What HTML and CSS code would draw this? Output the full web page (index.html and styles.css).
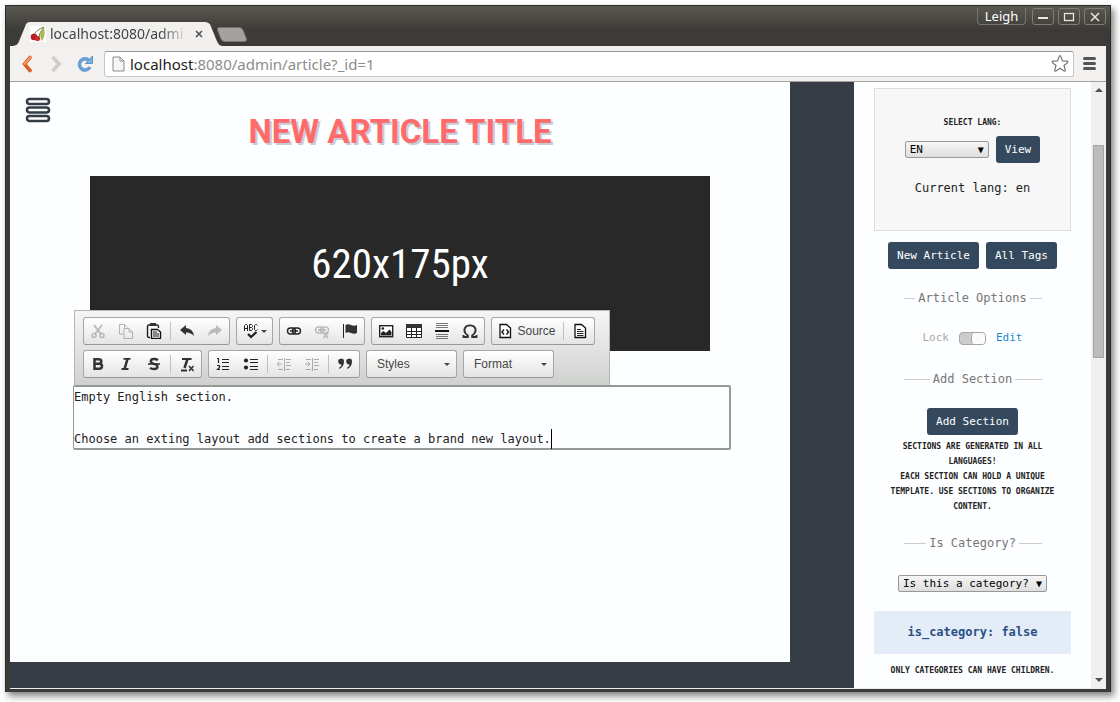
FILE: index.html
```html
<!DOCTYPE html>
<html lang="en">
<head>
<meta charset="utf-8">
<title>New article</title>
<link rel="stylesheet" href="styles.css">
</head>
<body>
<div class="window">
  <header class="titlebar">
    <div class="tab">
      <svg class="tab-shape" viewBox="0 0 208 24" preserveAspectRatio="none" aria-hidden="true"><path d="M0 24 C5 24 7 22 8 19 L14 4 C15 1 16 0 19 0 H189 C193 0 195 1 196 4 L202 19 C203 22 205 24 208 24 Z" fill="#f1f0ef"/></svg>
      <svg class="favicon" width="16" height="16" viewBox="0 0 16 16" aria-hidden="true"><rect width="16" height="16" fill="#fff"/><path d="M14 1 C9 3 6 5 3 10 M14 1 C11 5 9 8 9 12" fill="none" stroke="#7a6a3a"/><path d="M14 1 C15 6 15 11 12 15 C9 10 10 5 14 1Z" fill="#9dbb55"/><circle cx="4" cy="11" r="3.3" fill="#b3202a"/><circle cx="7.500" cy="12.500" r="2.600" fill="#d02a30"/></svg>
      <span class="tab-title">localhost:8080/admi</span>
      <button class="tab-close" aria-label="Close tab"><svg width="8" height="8" viewBox="0 0 8 8"><path d="M1 1L7 7M7 1L1 7" stroke="#555" stroke-width="1.700"/></svg></button>
    </div>
    <button class="new-tab" aria-label="New tab"><svg width="32" height="15" viewBox="0 0 32 15"><path d="M3 .5H23Q26 .5 27 3L30.500 12Q31 14.500 28 14.500H9Q6 14.500 5 12L1.500 3Q1 .5 3 .5Z" fill="#a3a29e" stroke="#77756f"/></svg></button>
    <div class="window-controls">
      <button class="user">Leigh</button>
      <button class="control" aria-label="Minimize"><svg width="12" height="10" viewBox="0 0 12 10"><path d="M1 6H11" stroke="#e8e6e1" stroke-width="2"/></svg></button>
      <button class="control" aria-label="Maximize"><svg width="12" height="10" viewBox="0 0 12 10"><rect x="1.500" y="1.500" width="9" height="7" fill="none" stroke="#e8e6e1" stroke-width="1.300"/></svg></button>
      <button class="control" aria-label="Close"><svg width="12" height="10" viewBox="0 0 12 10"><path d="M2 1L10 9M10 1L2 9" stroke="#e8e6e1" stroke-width="1.500"/></svg></button>
    </div>
  </header>
  <nav class="navbar">
    <button class="nav-button" aria-label="Back"><svg width="12" height="18" viewBox="0 0 12 18"><path d="M9 2.500L3.500 9L9 15.500" fill="none" stroke="#de5f25" stroke-width="3.600" stroke-linecap="round"/><path d="M9 2.500L3.500 9" fill="none" stroke="#ee9a62" stroke-width="2" stroke-linecap="round"/></svg></button>
    <button class="nav-button" aria-label="Forward"><svg width="12" height="18" viewBox="0 0 12 18"><path d="M3.500 3L9 9L3.500 15" fill="none" stroke="#cfcdca" stroke-width="3.600" stroke-linecap="round"/></svg></button>
    <button class="nav-button" aria-label="Reload"><svg width="18" height="18" viewBox="0 0 18 18"><path d="M13 5.500A5.600 5.600 0 1 0 14 12" fill="none" stroke="#6a9fd4" stroke-width="3.600"/><path d="M16.500 1V8.500H9.500Z" fill="#7fb0df" stroke="#5b92cb"/></svg></button>
    <div class="address">
      <svg width="13" height="16" viewBox="0 0 13 16" aria-hidden="true"><path d="M1 1H8L12 5V15H1Z" fill="#f5f5f5" stroke="#8b8b8b"/><path d="M8 1V5H12" fill="none" stroke="#8b8b8b"/></svg>
      <span class="url"><b>localhost</b>:8080/admin/article?_id=1</span>
      <button class="star" aria-label="Bookmark"><svg width="20" height="19" viewBox="0 0 20 19"><path d="M10 1.500Q10.500 1.500 11 3L12.500 7L17 7.200Q18.500 7.500 17.500 8.700L14 11.500L15.300 16Q15.500 17.500 14 17L10 14.300L6 17Q4.500 17.500 4.700 16L6 11.500L2.500 8.700Q1.500 7.500 3 7.200L7.500 7L9 3Q9.500 1.500 10 1.500Z" fill="#fff" stroke="#777" stroke-width="1.200"/></svg></button>
    </div>
    <button class="menu" aria-label="Menu"><svg width="13" height="13" viewBox="0 0 13 13"><path d="M1.500 1.500H11.500M1.500 6.500H11.500M1.500 11.500H11.500" stroke="#555" stroke-width="3" stroke-linecap="round"/></svg></button>
  </nav>
  <div class="page">
    <div class="backdrop">
      <main class="paper">
        <button class="site-menu" aria-label="Site menu"><svg width="26" height="26" viewBox="0 0 26 26"><g fill="#fff" stroke="#343c47" stroke-width="2.600"><rect x="2" y="2" width="22" height="5" rx="2.500"/><rect x="2" y="10.500" width="22" height="5" rx="2.500"/><rect x="2" y="19" width="22" height="5" rx="2.500"/></g></svg></button>
        <h1>NEW ARTICLE TITLE</h1>
        <div class="placeholder">620x175px</div>
        <section class="editor">
          <div class="toolbar" role="toolbar" aria-label="Editor toolbar">
            <div class="row">
              <div class="group">
                <button class="off" aria-label="Cut"><svg viewBox="0 0 16 16"><g fill="none" stroke="#777" stroke-width="1.500"><path d="M4 2L11 11M12 2L5 11" stroke-width="2"/><circle cx="4" cy="12.500" r="2"/><circle cx="12" cy="12.500" r="2"/></g></svg></button>
                <button class="off" aria-label="Copy"><svg viewBox="0 0 16 16"><path d="M5 11H1.500V1.500H6.500L9.500 4.500M6 5.500H11L14.500 9V15.500H6ZM11 5.500V9H14.500M6.500 1.500V5" fill="none" stroke="#666"/></svg></button>
                <button aria-label="Paste"><svg viewBox="0 0 16 16"><path d="M4 14.500H3Q1.500 14.500 1.500 13V3.500Q1.500 2 3 2H11Q12.500 2 12.500 3.500V5" fill="none" stroke="#222" stroke-width="1.400"/><path d="M4 0H10V3H4Z" fill="#333"/><path d="M5.500 6.500H11.500L14.500 9V15.500H5.500Z" fill="#fff" stroke="#111" stroke-width="1.400"/><path d="M7 9H11M7 11H13M7 13H13" stroke="#111"/></svg></button>
                <i class="sep"></i>
                <button aria-label="Undo"><svg viewBox="0 0 16 16"><path d="M1 7L7 2V5Q14 5.500 15 13Q12 9.500 7 9.500V12Z" fill="#333"/></svg></button>
                <button class="off" aria-label="Redo"><svg viewBox="0 0 16 16"><path d="M15 7L9 2V5Q2 5.500 1 13Q4 9.500 9 9.500V12Z" fill="#777"/></svg></button>
              </div>
              <div class="group">
                <button class="spell" aria-label="Spell check"><svg viewBox="0 0 16 16"><g fill="none" stroke="#222" stroke-width="1"><path d="M1.500 8V2.500L2.500 1.500H3.500L4.500 2.500V8M1.500 5.500H4.500M6.500 1.500V7.500H8.500L9.500 6.500V5.500L8.500 4.500H6.500M6.500 1.500H8.500L9.500 2.500V3.500L8.500 4.500M14.500 2.500L13.500 1.500H12.500L11.500 2.500V6.500L12.500 7.500H13.500L14.500 6.500"/><path d="M5 11L8 14L13.500 9" stroke-width="2.300"/></g></svg><span class="caret"></span></button>
              </div>
              <div class="group">
                <button aria-label="Link"><svg viewBox="0 0 16 16"><g fill="none" stroke="#222" stroke-width="1.400"><rect x="1.500" y="5" width="8" height="6" rx="3"/><rect x="6.500" y="5" width="8" height="6" rx="3"/><path d="M4 8H12"/></g></svg></button>
                <button class="off" aria-label="Unlink"><svg viewBox="0 0 16 16"><g fill="none" stroke="#777" stroke-width="1.400"><rect x="1.500" y="4" width="8" height="6" rx="3"/><rect x="6.500" y="4" width="8" height="6" rx="3"/><path d="M4 7H12M9.500 10L14 15M14 10L9.500 15" stroke-width="1.800"/></g></svg></button>
                <button aria-label="Anchor"><svg viewBox="0 0 16 16"><path d="M1.500 1V15" stroke="#222" stroke-width="1"/><path d="M3.500 2Q6 .5 9 2T15 2V10Q12 11.500 9 10T3.500 10Z" fill="#333"/></svg></button>
              </div>
              <div class="group">
                <button aria-label="Image"><svg viewBox="0 0 16 16"><rect x="1.700" y="2.700" width="13" height="11" fill="#fff" stroke="#222" stroke-width="1.400"/><path d="M3 12.500V10L5.500 8L8 10L11.500 6.500L13.500 9V12.500Z" fill="#222"/><circle cx="4.800" cy="5.500" r="1.300" fill="#222"/></svg></button>
                <button aria-label="Table"><svg viewBox="0 0 16 16"><path d="M.5 1.500H15.500V14.500H.5Z" fill="#fff" stroke="#222"/><path d="M0 1H16V5H0Z" fill="#333"/><path d="M0 8.500H16M0 11.500H16M5.500 5V15M10.500 5V15" stroke="#222"/></svg></button>
                <button aria-label="Horizontal line"><svg viewBox="0 0 16 16"><path d="M2 .5H14M2 2.500H14M2 4.500H14M2 11.500H14M2 13.500H14M2 15.500H14" stroke="#777"/><path d="M1 8H15" stroke="#111" stroke-width="2"/></svg></button>
                <button aria-label="Special character"><svg viewBox="0 0 16 16"><path d="M1.500 12V14H5.800V12.500C2.500 10 1.500 8 3 5C4.500 1.500 11.500 1.500 13 5C14.500 8 13.500 10 10.200 12.500V14H14.500V12" fill="none" stroke="#333" stroke-width="1.900"/></svg></button>
              </div>
              <div class="group">
                <button class="source"><svg viewBox="0 0 16 16" aria-hidden="true"><path d="M3 1.500H9.500L13.500 5V14.500H3Z" fill="#fff" stroke="#111" stroke-width="1.300"/><path d="M7 6.500L5 9L7 11.500M9.500 6.500L11.500 9L9.500 11.500" fill="none" stroke="#222" stroke-width="1.500"/></svg>Source</button>
                <i class="sep"></i>
                <button aria-label="Templates"><svg viewBox="0 0 16 16"><path d="M3 1.500H9.500L13.500 5V14.500H3Z" fill="#fff" stroke="#111" stroke-width="1.300"/><path d="M5 6.500H9M5 8.500H11.500M5 10.500H11.500M5 12.500H11.500" stroke="#222"/></svg></button>
              </div>
            </div>
            <div class="row">
              <div class="group">
                <button aria-label="Bold"><svg viewBox="0 0 16 16"><path d="M4.500 3.300H8.500Q11.300 3.300 11.300 5.500T8.500 7.700H4.500ZM4.500 7.700H9Q12 7.700 12 10.200T9 12.700H4.500Z" fill="none" stroke="#333" stroke-width="2.500"/></svg></button>
                <button aria-label="Italic"><svg viewBox="0 0 16 16"><path d="M5.500 2.900H12.500M3.500 13H10.500" stroke="#333" stroke-width="1.800"/><path d="M9.500 3L6.500 13" stroke="#333" stroke-width="2.600"/></svg></button>
                <button aria-label="Strikethrough"><svg viewBox="0 0 16 16"><path d="M12 4.200Q10.500 3 8 3Q4.800 3 4.800 5.300Q4.800 7 8 7.800Q11.500 8.500 11.500 10.700Q11.500 13 8 13Q5.500 13 4 11.800" fill="none" stroke="#333" stroke-width="2.300"/><path d="M2 8H14" stroke="#333" stroke-width="1.600"/></svg></button>
                <i class="sep"></i>
                <button aria-label="Remove format"><svg viewBox="0 0 16 16"><path d="M3 3H12.500M2 14.500H8" stroke="#333" stroke-width="1.800"/><path d="M8.500 3L5.500 12" stroke="#333" stroke-width="2.500"/><path d="M10 10L14.500 15M14.500 10L10 15" stroke="#333" stroke-width="1.600"/></svg></button>
              </div>
              <div class="group">
                <button aria-label="Numbered list"><svg viewBox="0 0 16 16"><path d="M2 2.500H3.500V7M2 9.500H4.500V11.500L2.500 13.500H5" fill="none" stroke="#222" stroke-width="1.200"/><path d="M7 3.500H14M7 6.500H14M7 10.500H14M7 13.500H14" stroke="#222" stroke-width="1.200"/></svg></button>
                <button aria-label="Bulleted list"><svg viewBox="0 0 16 16"><circle cx="3" cy="4.500" r="2.100" fill="#222"/><circle cx="3" cy="11.500" r="2.100" fill="#222"/><path d="M7 3.500H15M7 6.500H15M7 10.500H15M7 13.500H15" stroke="#222" stroke-width="1.200"/></svg></button>
                <i class="sep"></i>
                <button class="off" aria-label="Decrease indent"><svg viewBox="0 0 16 16"><path d="M1 8H6M3.500 5.500L1 8L3.500 10.500M2 3.500H7M2 13.500H7M8.500 2V15M10 3.500H15M10 6.500H14M10 9.500H15M10 13.500H14" fill="none" stroke="#555"/></svg></button>
                <button class="off" aria-label="Increase indent"><svg viewBox="0 0 16 16"><path d="M1 8H6M3.500 5.500L6 8L3.500 10.500M2 3.500H7M2 13.500H7M8.500 2V15M10 3.500H15M10 6.500H14M10 9.500H15M10 13.500H14" fill="none" stroke="#555"/></svg></button>
                <i class="sep"></i>
                <button aria-label="Block quote"><svg viewBox="0 0 16 16"><path d="M7 5.500A2.900 2.900 0 1 0 4.500 8.400Q4.500 10.500 2 11.800V13Q7 11 7 5.500ZM15 5.500A2.900 2.900 0 1 0 12.500 8.400Q12.500 10.500 10 11.800V13Q15 11 15 5.500Z" fill="#333"/></svg></button>
              </div>
              <div class="group"><button class="combo">Styles<span class="caret"></span></button></div>
              <div class="group"><button class="combo">Format<span class="caret"></span></button></div>
            </div>
          </div>
          <div class="edit-area" contenteditable="true" role="textbox" aria-label="Section content"><p>Empty English section.</p><p>Choose an exting layout add sections to create a brand new layout.<span class="cursor"></span></p></div>
        </section>
      </main>
    </div>
    <aside class="sidebar">
      <form class="panel">
        <label class="note" for="lang">SELECT LANG:</label>
        <div class="lang-row">
          <span class="select"><select id="lang"><option>EN</option></select></span>
          <button class="btn" type="button">View</button>
        </div>
        <p class="current">Current lang: en</p>
      </form>
      <div class="actions"><button class="btn">New Article</button><button class="btn">All Tags</button></div>
      <h2>Article Options</h2>
      <label class="lock"><span>Lock</span><input type="checkbox" checked><a href="#edit">Edit</a></label>
      <h2>Add Section</h2>
      <div class="add"><button class="btn">Add Section</button></div>
      <p class="note">SECTIONS ARE GENERATED IN ALL LANGUAGES!<br>EACH SECTION CAN HOLD A UNIQUE TEMPLATE. USE SECTIONS TO ORGANIZE CONTENT.</p>
      <h2 class="category-title">Is Category?</h2>
      <div class="category"><span class="select"><select aria-label="Is this a category?"><option>Is this a category?</option></select></span></div>
      <div class="status">is_category: false</div>
      <p class="note">ONLY CATEGORIES CAN HAVE CHILDREN.</p>
    </aside>
    <div class="scrollbar" aria-hidden="true"><span class="arrow up"></span><div class="track"><div class="thumb"></div></div><span class="arrow down"></span></div>
  </div>
</div>
</body>
</html>
```
FILE: styles.css
```css
* { box-sizing: border-box; }
body {
  margin: 0;
  height: 100vh;
  padding: 5px 9px 10px 5px;
  display: flex;
  background: #fff;
  font: 12px/16px "DejaVu Sans Mono", monospace;
  color: #222;
}
button { margin: 0; padding: 0; border: 0; background: none; font: inherit; color: inherit; }
svg { display: block; }
h1, h2, p { margin: 0; font-weight: normal; }

.window {
  flex: 1;
  min-width: 0;
  display: flex;
  flex-direction: column;
  padding: 0 4px 3px;
  background: #3c3b37;
  border: 1px solid #2b2a27;
  border-bottom: 0;
  box-shadow: 3px 4px 7px rgba(0, 0, 0, .5);
}
.titlebar {
  height: 40px;
  flex: none;
  display: flex;
  margin: 0 -4px;
  padding: 0 4px 0 5px;
  background: linear-gradient(#5a5953, #3c3b37 60%);
}
.tab {
  position: relative;
  align-self: flex-end;
  width: 212px;
  height: 24px;
  display: flex;
  align-items: center;
  padding-left: 19px;
}
.tab-shape { position: absolute; left: 0; top: 0; width: 100%; height: 100%; }
.favicon { position: relative; flex: none; }
.tab-title {
  position: relative;
  width: 138px;
  margin-left: 4px;
  overflow: hidden;
  white-space: nowrap;
  font: 14px/22px "Noto Sans", sans-serif;
  color: #444;
  -webkit-mask-image: linear-gradient(90deg, #000 80%, transparent);
  mask-image: linear-gradient(90deg, #000 80%, transparent);
}
.tab-close { position: relative; margin-left: 7px; }
.new-tab { align-self: flex-end; margin: 0 0 4px -7px; position: relative; }
.window-controls { margin-left: auto; display: flex; gap: 4px; align-items: flex-start; padding-top: 2px; }
.user {
  height: 17px;
  width: 49px;
  margin-right: 2px;
  border: 1px solid #77756f;
  border-top: 0;
  border-radius: 0 0 4px 4px;
  font: 13px/16px "Noto Sans", sans-serif;
  color: #fff;
}
.control {
  width: 22px;
  height: 17px;
  display: flex;
  align-items: center;
  justify-content: center;
  border: 1px solid #807e77;
  border-radius: 3px;
}
.navbar {
  height: 36px;
  flex: none;
  display: flex;
  align-items: center;
  background: #f2f1f0;
  border-bottom: 1px solid #a2a19c;
  padding: 0 10px 0 2px;
}
.nav-button { width: 29px; height: 24px; display: flex; align-items: center; justify-content: center; }
.address {
  flex: 1;
  height: 26px;
  margin: 0 9px 0 5px;
  padding: 0 3px 0 7px;
  display: flex;
  align-items: center;
  gap: 5px;
  background: #fff;
  border: 1px solid #c8c6c2;
  border-top-color: #999;
  border-radius: 3px;
}
.url { flex: 1; font: 15px/22px "Noto Sans", sans-serif; color: #8c8c8c; }
.url b { font-weight: normal; color: #222; }

.page { flex: 1; min-height: 0; display: flex; background: #fdfeff; border-bottom: 1px solid #eee; }
.backdrop { flex: 1; min-width: 0; padding: 0 64px 26px 0; display: flex; background: #363d47; }
.paper { flex: 1; min-width: 0; background: #fdfeff; position: relative; }
.site-menu { position: absolute; left: 15px; top: 15px; }
h1 {
  padding-top: 28px;
  text-align: center;
  font: bold 33px/44px Roboto, sans-serif;
  color: #ff6b6b;
  text-shadow: 2px 2px #c4cdd9;
}
.placeholder {
  max-width: 620px;
  height: 175px;
  margin: 22px auto 34px;
  display: flex;
  align-items: center;
  justify-content: center;
  background: #282828;
  color: #fff;
  font: 41px/60px "Liberation Sans Narrow", "Roboto Condensed", "Open Sans Condensed", "DejaVu Sans Condensed", sans-serif;
}
.editor { position: relative; margin: 0 59px 0 63px; }
.edit-area { border: 2px solid #979997; border-left-width: 1px; border-radius: 2px; line-height: 21px; outline: 0; }
.edit-area p + p { margin-top: 21px; height: 19px; white-space: nowrap; }
.cursor { display: inline-block; width: 1px; height: 20px; background: #000; vertical-align: top; }
.toolbar {
  position: absolute;
  left: 1px;
  bottom: 100%;
  width: 536px;
  height: 75px;
  padding: 6px 8px;
  display: flex;
  flex-direction: column;
  gap: 5px;
  border: 1px solid #b6b6b6;
  border-bottom: 0;
  background: linear-gradient(#f5f5f5, #cfd1cf);
}
.row { display: flex; gap: 6px; }
.group {
  height: 28px;
  display: flex;
  align-items: center;
  border: 1px solid #a6a6a6;
  border-bottom-color: #979797;
  border-radius: 3px;
  background: linear-gradient(#fff, #e4e4e4);
}
.group button { width: 28px; height: 26px; display: flex; align-items: center; justify-content: center; }
.group svg { width: 16px; height: 16px; flex: none; }
.group .off { opacity: .45; }
.sep { width: 1px; height: 18px; margin: 0 2px; background: #c0c0c0; }
.caret { width: 0; height: 0; border: 3px solid transparent; border-top-color: #474747; border-bottom: 0; }
.group .spell { width: 35px; gap: 2px; }
.group .source, .group .combo { font: 12px/17px "Liberation Sans", sans-serif; color: #474747; }
.group .source { width: 69px; gap: 4px; }
.group .combo { width: 89px; justify-content: space-between; padding: 0 6px 0 10px; }

.sidebar {
  flex: none;
  width: 237px;
  padding: 6px 20px 0;
  overflow: hidden;
  text-align: center;
}
.panel { height: 143px; padding-top: 26px; background: #f7f7f7; border: 1px solid #dcdddf; }
.note { display: block; padding: 0 8px; font-size: 8px; line-height: 15px; font-weight: bold; }
.lang-row { display: flex; gap: 7px; justify-content: center; align-items: center; margin-top: 6px; }
.lang-row .select { width: 84px; }
.btn { height: 27px; padding: 0 9px; border-radius: 3px; background: #34495e; color: #fff; font-size: 11px; }
.current { margin-top: 17px; }
.select { position: relative; display: inline-block; }
.select::after { content: "▼"; position: absolute; right: 5px; top: 0; font-size: 10px; line-height: 17px; color: #000; pointer-events: none; }
select {
  appearance: none;
  display: block;
  width: 100%;
  height: 17px;
  padding: 0 4px;
  border: 1px solid #999;
  border-radius: 2px;
  background: linear-gradient(#f6f6f6, #dedede);
  font: 11px/15px "DejaVu Sans Mono", monospace;
  color: #000;
}
.actions { display: flex; justify-content: center; gap: 7px; margin-top: 11px; }
h2 {
  width: 138px;
  margin: 21px auto 0;
  display: flex;
  align-items: center;
  gap: 3px;
  font-size: 12px;
  line-height: 16px;
  white-space: nowrap;
  color: #777;
}
h2::before, h2::after { content: ""; flex: 1; height: 1px; background: #ccc; }
.lock { display: flex; align-items: center; justify-content: center; gap: 10px; margin-top: 24px; height: 16px; font-size: 11px; color: #aaa; }
.lock a { color: #1e88d2; text-decoration: none; }
.lock input {
  appearance: none;
  width: 27px;
  height: 13px;
  margin: 0;
  display: flex;
  justify-content: flex-end;
  border: 1px solid #a5a5a5;
  border-radius: 4px;
  background: #ccc;
}
.lock input::after { content: ""; width: 13px; background: #fafafa; border-left: 1px solid #a5a5a5; border-radius: 3px; }
.lock + h2 { margin-top: 25px; }
.add { margin: 21px 0 4px; display: flex; justify-content: center; }
.category-title { margin-top: 21px; }
.category { margin-top: 24px; display: flex; justify-content: center; }
.category .select { width: 149px; }
.status { margin: 19px 0 9px; line-height: 43px; background: #e4ecf8; color: #2a5086; font-weight: bold; }
.scrollbar { flex: none; width: 15px; display: flex; flex-direction: column; align-items: center; padding: 6px 2px; background: #f0f0f0; }
.track { flex: 1; width: 100%; padding-top: 53px; }
.thumb { height: 40%; min-height: 40px; background: #bcbcbc; border: 1px solid #a5a5a5; }
.arrow { width: 0; height: 0; border: 4px solid transparent; }
.up { border-top: 0; border-bottom-color: #505050; }
.down { border-bottom: 0; border-top-color: #505050; }
```
